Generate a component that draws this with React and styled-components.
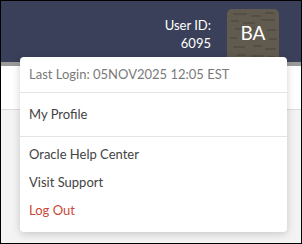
import styled, { createGlobalStyle } from "styled-components";

const GlobalStyle = createGlobalStyle`
    html, body{
        margin: 0;
        padding: 0;
    }
    body{
        font-family: Lato, "Open Sans", sans-serif;
    }
    *{
        box-sizing: border-box;
    }
`

const StyledFrame = styled.div`
    position: relative;
    width: 302px;
    height: 244px;
    border: 1px solid #000;
    background: #f3f3f3;
    overflow: hidden;
    display: flex;
    flex-direction: column;
`

const StyledHeader = styled.header`
    height: 61px;
    background: #3a4059;
    display: flex;
    justify-content: flex-end;
    align-items: flex-start;
    padding: 8px 22px 0 0;
    gap: 16px;
`

const StyledUser = styled.div`
    display: flex;
    flex-direction: column;
    align-items: flex-end;
    color: #fff;
    font-size: 13px;
    line-height: 18px;
    padding-top: 7px;
`

const StyledAvatar = styled.div`
    position: relative;
    width: 52px;
    height: 52px;
    border-radius: 5px;
    background: #615a4e;
    display: flex;
    align-items: center;
    justify-content: center;
    overflow: hidden;
    color: #fff;
    font-size: 19px;
    span{
        position: relative;
        margin-top: -6px;
    }
    svg{
        position: absolute;
        inset: 0;
    }
`

const StyledToolbar = styled.div`
    height: 4px;
    background: #9a9a98;
`

const StyledPanel = styled.div`
    height: 44px;
    background: #fff;
    border-bottom: 1px solid #dcdcdc;
`

const StyledMenu = styled.ul`
    position: absolute;
    top: 56px;
    left: 19px;
    width: 267px;
    margin: 0;
    padding: 0 0 8px;
    list-style: none;
    background: #fff;
    border-radius: 4px;
    box-shadow: 0 2px 8px rgba(0, 0, 0, 0.18);
`

const StyledMenuItem = styled.li`
    height: ${({ $h }) => $h || 28}px;
    display: flex;
    align-items: center;
    padding: 0 9px;
    font-size: 13px;
    color: ${({ $tone }) => $tone === "red" ? "#c9473a" : $tone === "muted" ? "#7a7a7a" : "#434343"};
    border-bottom: ${({ $divider }) => $divider ? "1px solid #e4e4e4" : "none"};
    padding-bottom: ${({ $divider }) => $divider ? 1 : 0}px;
    margin-top: ${({ $gap }) => $gap || 0}px;
`

const Bark = () => {
    const dashes = [
        [6, 5, 14], [24, 7, 10], [38, 4, 9], [4, 12, 8], [16, 14, 12], [34, 11, 14],
        [8, 20, 10], [22, 19, 6], [40, 21, 9], [3, 29, 7], [14, 30, 11], [42, 30, 8],
        [6, 38, 12], [26, 37, 9], [38, 40, 11], [10, 46, 9], [24, 47, 12], [40, 48, 8],
    ];
    return (
        <svg width="52" height="52" viewBox="0 0 52 52">
            {dashes.map(([x, y, w], i) => (
                <line key={i} x1={x} y1={y} x2={x + w} y2={y} stroke="#3f3a32" strokeWidth="1" opacity="0.7" />
            ))}
        </svg>
    );
}

const MenuItem = ({ text, tone, divider, h, gap }) => {
    return (
        <StyledMenuItem $tone={tone} $divider={divider} $h={h} $gap={gap}>{text}</StyledMenuItem>
    )
}

const App = () => {
    return (
        <StyledFrame>
            <GlobalStyle />
            <StyledHeader>
                <StyledUser>
                    <span>User ID:</span>
                    <span>6095</span>
                </StyledUser>
                <StyledAvatar>
                    <Bark />
                    <span>BA</span>
                </StyledAvatar>
            </StyledHeader>
            <StyledToolbar />
            <StyledPanel />
            <StyledMenu>
                <MenuItem text={'Last Login: 05NOV2025 12:05 EST'} tone="muted" divider h={36} />
                <MenuItem text={'My Profile'} divider h={44} />
                <MenuItem text={'Oracle Help Center'} gap={3} />
                <MenuItem text={'Visit Support'} />
                <MenuItem text={'Log Out'} tone="red" />
            </StyledMenu>
        </StyledFrame>
    )
}

export default App;
